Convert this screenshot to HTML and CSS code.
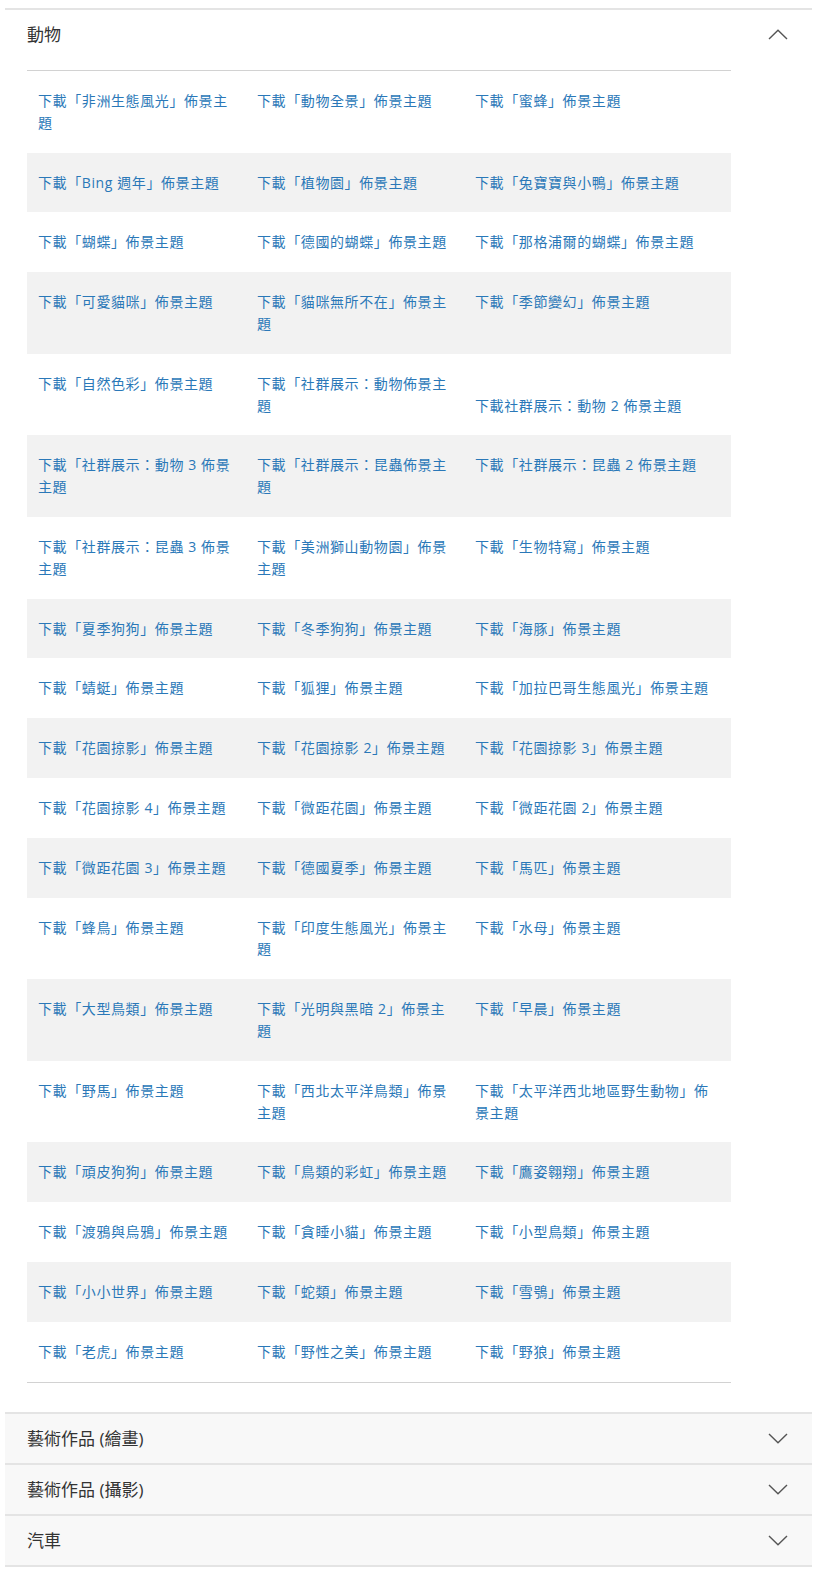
FILE: index.html
```html
<!DOCTYPE html>
<html lang="zh-Hant">
<head>
<meta charset="utf-8">
<title>佈景主題</title>
<link rel="stylesheet" href="styles.css">
</head>
<body>
<div class="accordion">
  <section class="item open">
    <div class="head">
      <span class="title">動物</span>
      <svg class="chev" width="20" height="11" viewBox="0 0 20 11"><polyline points="1,10 10,1.2 19,10"/></svg>
    </div>
    <div class="panel">
      <div class="grid">
        <div class="row"><a class="cell">下載「非洲生態風光」佈景主題</a><a class="cell">下載「動物全景」佈景主題</a><a class="cell">下載「蜜蜂」佈景主題</a></div>
        <div class="row"><a class="cell">下載「Bing 週年」佈景主題</a><a class="cell">下載「植物園」佈景主題</a><a class="cell">下載「兔寶寶與小鴨」佈景主題</a></div>
        <div class="row"><a class="cell">下載「蝴蝶」佈景主題</a><a class="cell">下載「德國的蝴蝶」佈景主題</a><a class="cell">下載「那格浦爾的蝴蝶」佈景主題</a></div>
        <div class="row"><a class="cell">下載「可愛貓咪」佈景主題</a><a class="cell">下載「貓咪無所不在」佈景主題</a><a class="cell">下載「季節變幻」佈景主題</a></div>
        <div class="row"><a class="cell">下載「自然色彩」佈景主題</a><a class="cell">下載「社群展示：動物佈景主題</a><a class="cell"><br>下載社群展示：動物 2 佈景主題</a></div>
        <div class="row"><a class="cell">下載「社群展示：動物 3 佈景主題</a><a class="cell">下載「社群展示：昆蟲佈景主題</a><a class="cell">下載「社群展示：昆蟲 2 佈景主題</a></div>
        <div class="row"><a class="cell">下載「社群展示：昆蟲 3 佈景主題</a><a class="cell">下載「美洲獅山動物園」佈景主題</a><a class="cell">下載「生物特寫」佈景主題</a></div>
        <div class="row"><a class="cell">下載「夏季狗狗」佈景主題</a><a class="cell">下載「冬季狗狗」佈景主題</a><a class="cell">下載「海豚」佈景主題</a></div>
        <div class="row"><a class="cell">下載「蜻蜓」佈景主題</a><a class="cell">下載「狐狸」佈景主題</a><a class="cell">下載「加拉巴哥生態風光」佈景主題</a></div>
        <div class="row"><a class="cell">下載「花園掠影」佈景主題</a><a class="cell">下載「花園掠影 2」佈景主題</a><a class="cell">下載「花園掠影 3」佈景主題</a></div>
        <div class="row"><a class="cell">下載「花園掠影 4」佈景主題</a><a class="cell">下載「微距花園」佈景主題</a><a class="cell">下載「微距花園 2」佈景主題</a></div>
        <div class="row"><a class="cell">下載「微距花園 3」佈景主題</a><a class="cell">下載「德國夏季」佈景主題</a><a class="cell">下載「馬匹」佈景主題</a></div>
        <div class="row"><a class="cell">下載「蜂鳥」佈景主題</a><a class="cell">下載「印度生態風光」佈景主題</a><a class="cell">下載「水母」佈景主題</a></div>
        <div class="row"><a class="cell">下載「大型鳥類」佈景主題</a><a class="cell">下載「光明與黑暗 2」佈景主題</a><a class="cell">下載「早晨」佈景主題</a></div>
        <div class="row"><a class="cell">下載「野馬」佈景主題</a><a class="cell">下載「西北太平洋鳥類」佈景主題</a><a class="cell">下載「太平洋西北地區野生動物」佈景主題</a></div>
        <div class="row"><a class="cell">下載「頑皮狗狗」佈景主題</a><a class="cell">下載「鳥類的彩虹」佈景主題</a><a class="cell">下載「鷹姿翱翔」佈景主題</a></div>
        <div class="row"><a class="cell">下載「渡鴉與烏鴉」佈景主題</a><a class="cell">下載「貪睡小貓」佈景主題</a><a class="cell">下載「小型鳥類」佈景主題</a></div>
        <div class="row"><a class="cell">下載「小小世界」佈景主題</a><a class="cell">下載「蛇類」佈景主題</a><a class="cell">下載「雪鴞」佈景主題</a></div>
        <div class="row"><a class="cell">下載「老虎」佈景主題</a><a class="cell">下載「野性之美」佈景主題</a><a class="cell">下載「野狼」佈景主題</a></div>
      </div>
    </div>
  </section>
  <section class="item closed">
    <div class="head">
      <span class="title">藝術作品 (繪畫)</span>
      <svg class="chev" width="20" height="11" viewBox="0 0 20 11"><polyline points="1,1 10,9.8 19,1"/></svg>
    </div>
  </section>
  <section class="item closed">
    <div class="head">
      <span class="title">藝術作品 (攝影)</span>
      <svg class="chev" width="20" height="11" viewBox="0 0 20 11"><polyline points="1,1 10,9.8 19,1"/></svg>
    </div>
  </section>
  <section class="item closed last">
    <div class="head">
      <span class="title">汽車</span>
      <svg class="chev" width="20" height="11" viewBox="0 0 20 11"><polyline points="1,1 10,9.8 19,1"/></svg>
    </div>
  </section>
</div>
</body>
</html>
```
FILE: styles.css
```css
html, body {
  margin: 0;
  padding: 0;
  background: #ffffff;
}
body {
  font-family: "Open Sans", "Noto Sans CJK TC", sans-serif;
  color: #333333;
}
.accordion {
  margin: 8px 18px 0 5px;
}
.item {
  border-top: 2px solid #e4e4e4;
}
.item.last {
  border-bottom: 2px solid #e4e4e4;
}
.item.closed {
  background: #f8f8f8;
}
.head {
  height: 49px;
  display: flex;
  align-items: center;
  justify-content: space-between;
  padding: 0 24px 0 22px;
}
.title {
  font-size: 17px;
  color: #333333;
  line-height: 1;
}
.chev {
  display: block;
}
.chev polyline {
  fill: none;
  stroke: #555555;
  stroke-width: 1.4;
}
.panel {
  padding: 11px 81px 29px 22px;
}
.grid {
  border-top: 1px solid #d2d2d2;
  border-bottom: 1px solid #d2d2d2;
}
.row {
  display: grid;
  grid-template-columns: 219px 218px 1fr;
}
.row:nth-child(even) {
  background: #f2f2f2;
}
.cell {
  display: block;
  padding: 19px 11px;
  font-size: 14px;
  line-height: 21.8px;
  letter-spacing: 0.6px;
  color: #2a78b8;
  text-decoration: none;
}
```
